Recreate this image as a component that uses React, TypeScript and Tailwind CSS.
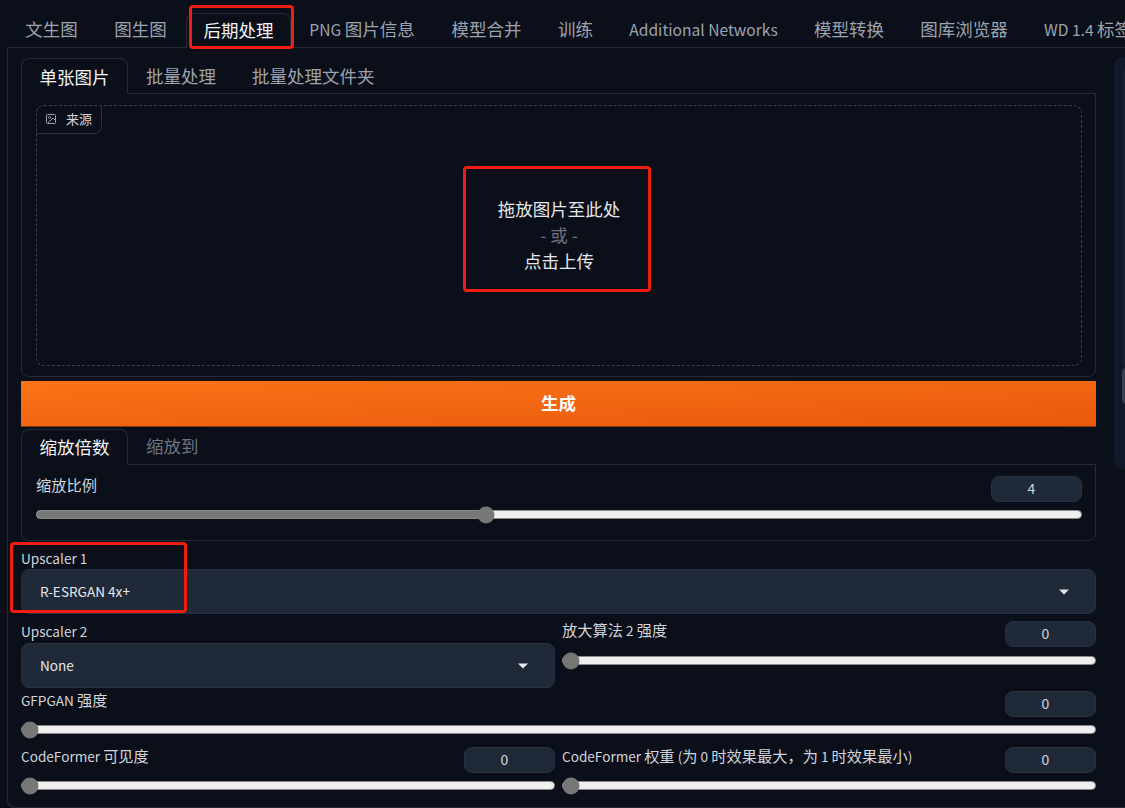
import type { ReactNode } from "react";

const font = { fontFamily: '"Noto Sans CJK SC", "Noto Sans", sans-serif' };

function Z({ children }: { children: ReactNode }) {
  return <span className="text-[15.25px]">{children}</span>;
}

function T({ children }: { children: ReactNode }) {
  return <span className="text-[17.5px]">{children}</span>;
}

function Slider({ percent, className = "" }: { percent: number; className?: string }) {
  return (
    <div className={`relative h-[9px] rounded-full border border-[#8a8a8a] bg-[#efefef] ${className}`}>
      <div className="h-full rounded-full bg-[#777777]" style={{ width: `${percent}%` }} />
      <div
        className="absolute top-1/2 h-[17px] w-[17px] -translate-x-1/2 -translate-y-1/2 rounded-full bg-[#777777]"
        style={{ left: percent === 0 ? "8px" : `${percent}%` }}
      />
    </div>
  );
}

function NumberBox({ value }: { value: string }) {
  return (
    <div className="flex h-[26px] w-[91px] items-center justify-center rounded-lg border border-[#283141] bg-[#1f2937] pb-[2px] pr-[10px] text-[14px] text-[#d1d5db]">
      {value}
    </div>
  );
}

function Select({ value, className = "" }: { value: string; className?: string }) {
  return (
    <div className={`flex h-[45px] items-center justify-between rounded-lg border border-[#283141] bg-[#1f2937] pl-[18px] pr-[26px] text-[13.6px] text-[#e5e7eb] ${className}`}>
      <span>{value}</span>
      <svg width="10" height="6" viewBox="0 0 10 6"><path d="M0 0.5h10L5 5.5z" fill="#e5e7eb" /></svg>
    </div>
  );
}

function TopTab({ children, active, className = "" }: { children: ReactNode; active?: boolean; className?: string }) {
  return (
    <div
      className={`flex h-[35px] shrink-0 items-center whitespace-nowrap text-[15.6px] ${
        active
          ? "relative z-10 -mb-px rounded-t-lg border border-b-0 border-[#252b38] bg-[#0b0f19] text-[#f3f4f6]"
          : "text-[#9ca3af]"
      } ${className}`}
    >
      <span>{children}</span>
    </div>
  );
}

function SliderHead({ label, value }: { label: ReactNode; value?: string }) {
  return (
    <div className="flex h-[26px] items-center justify-between">
      <span className="-mt-[9px] text-[13.6px] text-[#d1d5db]">{label}</span>
      {value ? <NumberBox value={value} /> : null}
    </div>
  );
}

export default function App() {
  return (
    <div style={font} className="relative h-[808px] w-[1125px] overflow-hidden bg-[#0b0f19]">
      {/* top tabs */}
      <div className="flex h-[47px] items-end pl-[7px]">
        <TopTab className="w-[89px] justify-center"><T>文生图</T></TopTab>
        <TopTab className="w-[90px] justify-center pr-[1px]"><T>图生图</T></TopTab>
        <TopTab active className="w-[105px] justify-center pb-[2px]"><T>后期处理</T></TopTab>
        <TopTab className="w-[142px] justify-center">PNG <T>图片信息</T></TopTab>
        <TopTab className="w-[107px] justify-center"><T>模型合并</T></TopTab>
        <TopTab className="w-[71px] justify-center"><T>训练</T></TopTab>
        <TopTab className="w-[185px] justify-center">Additional Networks</TopTab>
        <TopTab className="w-[106px] justify-center"><T>模型转换</T></TopTab>
        <TopTab className="w-[124px] justify-center"><T>图库浏览器</T></TopTab>
        <TopTab className="pl-[18px]">WD 1.4 <T>标签器</T></TopTab>
      </div>

      {/* outer panel */}
      <div className="ml-[7px] h-[761px] w-[1200px] rounded-bl-lg border-b border-l border-t border-[#252b38] pl-[13px] pt-[9px]">
        <div className="flex items-start">
          <div className="w-[1075px]">
            {/* sub tabs */}
            <div className="flex h-[36px] items-end">
              <div className="relative z-10 -mb-px flex h-[36px] w-[107px] items-center justify-center rounded-t-lg border border-b-0 border-[#252b38] bg-[#0b0f19] pt-[2px] text-[17.5px] text-[#f3f4f6]">
                单张图片
              </div>
              <div className="flex h-[35px] items-center pl-[18px] pt-[1px] text-[17.5px] text-[#9ca3af]">批量处理</div>
              <div className="flex h-[35px] items-center pl-[36px] pt-[1px] text-[17.5px] text-[#9ca3af]">批量处理文件夹</div>
            </div>
            <div className="h-[284px] rounded-b-lg border border-[#252b38] pb-[11px] pl-[14px] pr-[13px] pt-[11px]">
              <div className="relative flex h-[261px] flex-col items-center justify-center rounded-lg border border-dashed border-[#374151] pb-[1px] text-[17.5px] leading-[26px] text-[#e5e7eb]">
                <div className="absolute -left-px -top-px flex h-[29px] w-[66px] items-center gap-[9px] rounded-br-lg rounded-tl-lg border-b border-r border-[#283141] pl-[9px] text-[13px] text-[#d1d5db]">
                  <svg width="12" height="12" viewBox="0 0 24 24" fill="none" stroke="#9ca3af" strokeWidth="2">
                    <rect x="3" y="3" width="18" height="18" rx="2" />
                    <circle cx="9" cy="9" r="2" />
                    <path d="M21 15l-5-5L5 21" />
                  </svg>
                  <span>来源</span>
                </div>
                <div>拖放图片至此处</div>
                <div className="text-[#6b7280]">- 或 -</div>
                <div>点击上传</div>
              </div>
            </div>

            {/* generate */}
            <div className="mt-[4px] flex h-[46px] items-center justify-center border-b border-[#8a3a0a] bg-gradient-to-br from-[#f97316] to-[#ea580c] text-[17.5px] font-bold text-white">
              生成
            </div>

            {/* scale tabs */}
            <div className="mt-[1px] flex h-[36px] items-end">
              <div className="relative z-10 -mb-px flex h-[36px] w-[107px] items-center justify-center rounded-t-lg border border-b-0 border-[#252b38] bg-[#0b0f19] text-[17.5px] text-[#f3f4f6]">
                缩放倍数
              </div>
              <div className="flex h-[35px] items-center pl-[18px] text-[17.5px] text-[#6b7280]">缩放到</div>
            </div>
            <div className="h-[77px] rounded-b-lg border border-[#252b38] pl-[14px] pr-[13px] pt-[11px]">
              <SliderHead label={<Z>缩放比例</Z>} value="4" />
              <Slider percent={43} className="mt-[8px]" />
            </div>

            {/* upscaler 1 */}
            <div className="mb-[2px] mt-[8px] flex h-[18px] items-center text-[13.6px] text-[#d1d5db]">Upscaler 1</div>
            <Select value="R-ESRGAN 4x+" />

            {/* upscaler 2 */}
            <div className="mt-[7px] flex gap-[7px]">
              <div className="w-[534px]">
                <div className="flex h-[22px] items-center pb-[2px] text-[13.6px] text-[#d1d5db]">Upscaler 2</div>
                <Select value="None" />
              </div>
              <div className="w-[534px]">
                <SliderHead label={<><Z>放大算法</Z> 2 <Z>强度</Z></>} value="0" />
                <Slider percent={0} className="mt-[9px]" />
              </div>
            </div>

            {/* gfpgan */}
            <div className="mt-[3px]">
              <SliderHead label={<>GFPGAN <Z>强度</Z></>} value="0" />
              <Slider percent={0} className="mt-[8px]" />
            </div>

            {/* codeformer */}
            <div className="mt-[13px] flex gap-[7px]">
              <div className="w-[534px]">
                <SliderHead label={<>CodeFormer <Z>可见度</Z></>} value="0" />
                <Slider percent={0} className="mt-[8px]" />
              </div>
              <div className="w-[534px]">
                <SliderHead label={<>CodeFormer <Z>权重</Z> (<Z>为</Z> 0 <Z>时效果最大，为</Z> 1 <Z>时效果最小</Z>)</>} value="0" />
                <Slider percent={0} className="mt-[8px]" />
              </div>
            </div>
          </div>

          {/* right column */}
          <div className="ml-[18px] h-[412px] w-[40px] rounded-lg bg-[#111827] pl-[8px] pt-[12px]">
            <div className="h-[298px] rounded-l-md bg-[#182131]" />
            <div className="h-[38px] rounded-l-md bg-[#374151]" />
          </div>
        </div>
      </div>

      {/* annotations */}
      <div className="absolute left-[189px] top-[5px] z-20 h-[44px] w-[105px] rounded-[4px] border-[3px] border-[#f01d10]" />
      <div className="absolute left-[463px] top-[166px] z-20 h-[126px] w-[188px] rounded-[4px] border-[3px] border-[#f01d10]" />
      <div className="absolute left-[10px] top-[542px] z-20 h-[71px] w-[177px] rounded-[4px] border-[3px] border-[#f01d10]" />
    </div>
  );
}
